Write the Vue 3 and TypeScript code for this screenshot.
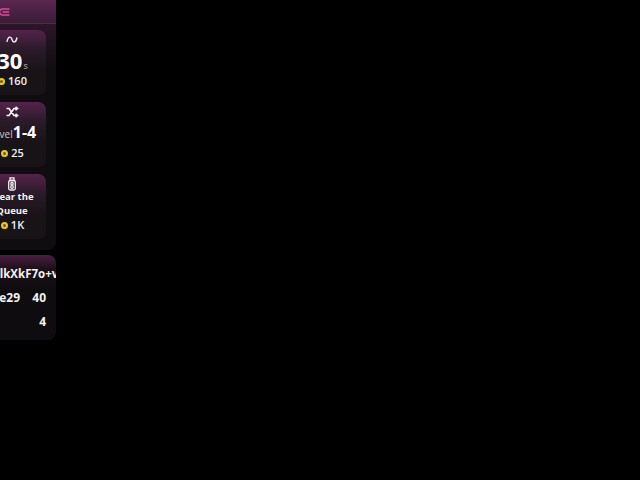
<script setup lang="ts">
interface Card { kind: string; cost: string }
const cards: Card[] = [
  { kind: 'wave', cost: '160' },
  { kind: 'shuffle', cost: '25' },
  { kind: 'clear', cost: '1K' },
]
</script>

<template>
  <div class="page">
    <section class="panel shop">
      <header class="head">
        <svg class="logo" width="12" height="8" viewBox="0 0 12 8" fill="none" stroke="#e0489a" stroke-width="1.5">
          <path d="M10.500 1H3.500a3 3 0 0 0 0 6h7" />
          <path d="M3.500 4h6.500" />
        </svg>
      </header>
      <div class="cards">
        <article v-for="c in cards" :key="c.kind" class="card">
          <svg v-if="c.kind === 'wave'" class="icon" width="14" height="14" viewBox="0 0 14 14" fill="none" stroke="#eee" stroke-width="1.400">
            <path d="M2 9c1-6 4-6 5-2.500s4 3.500 5-2" />
          </svg>
          <svg v-else-if="c.kind === 'shuffle'" class="icon" width="14" height="14" viewBox="0 0 14 14" fill="none" stroke="#f4f4f4" stroke-width="1.700">
            <path d="M1.500 3.500h2.500l5 7h3M1.500 10.500h2.500l5-7h3" />
            <path d="M10.500 1.800l2 1.700-2 1.700M10.500 8.800l2 1.700-2 1.700" />
          </svg>
          <svg v-else class="icon" width="14" height="14" viewBox="0 0 14 14" fill="none" stroke="#f0f0f0" stroke-width="1.300">
            <path d="M5 .8h4v2.700H5z" />
            <rect x="3.700" y="3.500" width="6.600" height="9.500" rx="1.500" />
            <circle cx="7" cy="6.700" r="1.200" />
            <circle cx="7" cy="10" r="1.300" />
          </svg>
          <div v-if="c.kind === 'wave'" class="value"><b class="big">30</b><span class="unit">s</span></div>
          <div v-else-if="c.kind === 'shuffle'" class="value"><span class="label">Level</span><b class="big small">1-4</b></div>
          <div v-else class="title">Clear the Queue</div>
          <div class="cost"><i class="coin"></i><span>{{ c.cost }}</span></div>
        </article>
      </div>
    </section>
    <section class="panel stats">
      <div class="code">9xVlkXkF7o+vQ</div>
      <div class="row"><span class="left">0xe29</span><span class="right">40</span></div>
      <div class="row"><span class="left"></span><span class="right">4</span></div>
    </section>
  </div>
</template>

<style>
html, body { background: #000; margin: 0; }
</style>

<style scoped>
.page {
  width: 88px;
  margin-left: -32px;
  display: flex;
  flex-direction: column;
  gap: 5px;
  font-family: "Open Sans", sans-serif;
  color: #f2f2f2;
  height: 480px;
  overflow: hidden;
}
.panel {
  border-radius: 8px;
  overflow: hidden;
}
.shop { height: 250px; border-radius: 0 0 8px 8px; background: #100d10; }
.head {
  height: 24px;
  box-sizing: border-box;
  display: flex;
  align-items: center;
  padding-left: 31px;
  background: linear-gradient(180deg, #5a2650, #3a1c38);
  border-bottom: 1px solid #55284c;
}
.cards {
  display: flex;
  flex-direction: column;
  gap: 7px;
  padding: 6px 10px;
  background: linear-gradient(180deg, #2c1629, #100d10 45px);
}
.card {
  height: 65px;
  border-radius: 8px;
  background: linear-gradient(180deg, #54234b 0, #2c1b2b 18px, #171316 42px);
  display: flex;
  flex-direction: column;
  align-items: center;
  padding-top: 3px;
  box-sizing: border-box;
}
.icon { display: block; flex: none; }
.value {
  display: flex;
  align-items: baseline;
  height: 26px;
  line-height: 26px;
  white-space: nowrap;
  padding-left: 1px;
}
.big { font-size: 22px; font-weight: 700; color: #fff; }
.big.small { font-size: 16px; }
.unit { font-size: 9px; color: #bbb; margin-left: 1px; }
.label { font-size: 10px; color: #ccc; }
.title {
  font-size: 9.500px;
  font-weight: 700;
  line-height: 14px;
  width: 60px;
  text-align: center;
  height: 27px;
  margin-top: -1px;
}
.cost {
  display: flex;
  align-items: center;
  gap: 3px;
  padding-left: 2px;
  font-size: 11px;
  font-weight: 600;
  line-height: 16px;
}
.coin {
  width: 7px;
  height: 7px;
  box-sizing: border-box;
  border-radius: 50%;
  background: #6a5a10;
  border: 2px solid #e8cc20;
  margin-left: -1px;
}
.stats {
  height: 85px;
  background: linear-gradient(180deg, #4a1e42 0, #1c1019 14px, #0e0c0e 36px);
  padding: 9px 10px 0;
  box-sizing: border-box;
  font-size: 12px;
  font-weight: 700;
}
.code { white-space: nowrap; line-height: 20px; margin-left: 1px; font-size: 11.500px; }
.row {
  display: flex;
  justify-content: flex-end;
  gap: 12px;
  line-height: 24px;
  margin-top: 2px;
}
.row + .row { margin-top: 0; }
.left { margin-right: auto; flex: 0 0 auto; width: 42px; text-align: right; }
.right { flex: none; }
</style>
